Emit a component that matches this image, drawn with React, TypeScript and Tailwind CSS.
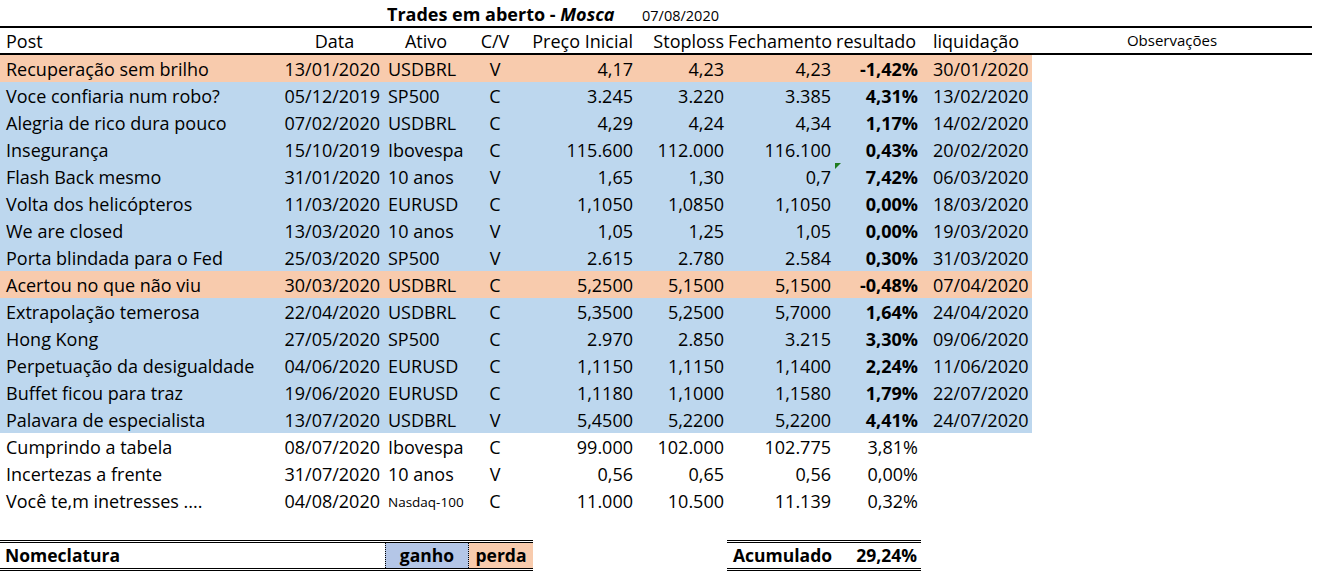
const cols =
  "grid grid-cols-[285px_99px_84px_52px_116px_91px_108px_86px_111px_280px]";

type Trade = {
  post: string;
  data: string;
  ativo: string;
  cv: string;
  inicial: string;
  stop: string;
  fech: string;
  res: string;
  liq: string;
  tone: "win" | "loss" | "open";
  flag?: boolean;
  small?: boolean;
};

const trades: Trade[] = [
  { post: "Recuperação sem brilho", data: "13/01/2020", ativo: "USDBRL", cv: "V", inicial: "4,17", stop: "4,23", fech: "4,23", res: "-1,42%", liq: "30/01/2020", tone: "loss" },
  { post: "Voce confiaria num robo?", data: "05/12/2019", ativo: "SP500", cv: "C", inicial: "3.245", stop: "3.220", fech: "3.385", res: "4,31%", liq: "13/02/2020", tone: "win" },
  { post: "Alegria de rico dura pouco", data: "07/02/2020", ativo: "USDBRL", cv: "C", inicial: "4,29", stop: "4,24", fech: "4,34", res: "1,17%", liq: "14/02/2020", tone: "win" },
  { post: "Insegurança", data: "15/10/2019", ativo: "Ibovespa", cv: "C", inicial: "115.600", stop: "112.000", fech: "116.100", res: "0,43%", liq: "20/02/2020", tone: "win" },
  { post: "Flash Back mesmo", data: "31/01/2020", ativo: "10 anos", cv: "V", inicial: "1,65", stop: "1,30", fech: "0,7", res: "7,42%", liq: "06/03/2020", tone: "win", flag: true },
  { post: "Volta dos helicópteros", data: "11/03/2020", ativo: "EURUSD", cv: "C", inicial: "1,1050", stop: "1,0850", fech: "1,1050", res: "0,00%", liq: "18/03/2020", tone: "win" },
  { post: "We are closed", data: "13/03/2020", ativo: "10 anos", cv: "V", inicial: "1,05", stop: "1,25", fech: "1,05", res: "0,00%", liq: "19/03/2020", tone: "win" },
  { post: "Porta blindada para o Fed", data: "25/03/2020", ativo: "SP500", cv: "V", inicial: "2.615", stop: "2.780", fech: "2.584", res: "0,30%", liq: "31/03/2020", tone: "win" },
  { post: "Acertou no que não viu", data: "30/03/2020", ativo: "USDBRL", cv: "C", inicial: "5,2500", stop: "5,1500", fech: "5,1500", res: "-0,48%", liq: "07/04/2020", tone: "loss" },
  { post: "Extrapolação temerosa", data: "22/04/2020", ativo: "USDBRL", cv: "C", inicial: "5,3500", stop: "5,2500", fech: "5,7000", res: "1,64%", liq: "24/04/2020", tone: "win" },
  { post: "Hong Kong", data: "27/05/2020", ativo: "SP500", cv: "C", inicial: "2.970", stop: "2.850", fech: "3.215", res: "3,30%", liq: "09/06/2020", tone: "win" },
  { post: "Perpetuação da desigualdade", data: "04/06/2020", ativo: "EURUSD", cv: "C", inicial: "1,1150", stop: "1,1150", fech: "1,1400", res: "2,24%", liq: "11/06/2020", tone: "win" },
  { post: "Buffet ficou para traz", data: "19/06/2020", ativo: "EURUSD", cv: "C", inicial: "1,1180", stop: "1,1000", fech: "1,1580", res: "1,79%", liq: "22/07/2020", tone: "win" },
  { post: "Palavara de especialista", data: "13/07/2020", ativo: "USDBRL", cv: "V", inicial: "5,4500", stop: "5,2200", fech: "5,2200", res: "4,41%", liq: "24/07/2020", tone: "win" },
  { post: "Cumprindo a tabela", data: "08/07/2020", ativo: "Ibovespa", cv: "C", inicial: "99.000", stop: "102.000", fech: "102.775", res: "3,81%", liq: "", tone: "open" },
  { post: "Incertezas a frente", data: "31/07/2020", ativo: "10 anos", cv: "V", inicial: "0,56", stop: "0,65", fech: "0,56", res: "0,00%", liq: "", tone: "open" },
  { post: "Você te,m inetresses ....", data: "04/08/2020", ativo: "Nasdaq-100", cv: "C", inicial: "11.000", stop: "10.500", fech: "11.139", res: "0,32%", liq: "", tone: "open", small: true },
];

const fills = {
  win: "bg-[#bdd7ee]",
  loss: "bg-[#f8cbad]",
  open: "",
};

const TradeRow = ({ t }: { t: Trade }) => {
  const bg = fills[t.tone];
  const cell = `h-[27px] flex items-center whitespace-nowrap ${bg}`;
  return (
    <div className={cols}>
      <div className={`${cell} pl-[6px]`}>{t.post}</div>
      <div className={`${cell} justify-end pr-[4px]`}>{t.data}</div>
      <div className={`${cell} pl-[4px] ${t.small ? "pt-[4px] text-[13.5px]" : ""}`}>{t.ativo}</div>
      <div className={`${cell} justify-center pl-[2px]`}>{t.cv}</div>
      <div className={`${cell} justify-end pr-[3px]`}>{t.inicial}</div>
      <div className={`${cell} justify-end pr-[3px]`}>{t.stop}</div>
      <div className={`${cell} justify-end pr-[4px]`}>{t.fech}</div>
      <div className={`${cell} relative justify-end pr-[3px] ${t.tone === "open" ? "" : "font-bold"}`}>
        {/* green error marker, top-left corner */}
        {t.flag && (
          <span className="absolute left-0 top-0 h-0 w-0 border-t-[6px] border-r-[6px] border-t-[#1e7b1e] border-r-transparent" />
        )}
        {t.res}
      </div>
      <div className={`${cell} pl-[12px]`}>{t.liq}</div>
      <div className="h-[27px]"></div>
    </div>
  );
};

export default function App() {
  return (
    <div className="h-[584px] w-[1318px] bg-white font-['Open_Sans',sans-serif] text-[18px] leading-none text-black">
      <div className="w-[1312px]">
        {/* Title */}
        <div className={`${cols} h-[26px] items-end pb-[3px]`}>
          <div className="col-span-2"></div>
          <div className="col-span-3 whitespace-nowrap pl-[3px] font-bold">
            Trades em aberto - <span className="italic">Mosca</span>
          </div>
          <div className="pl-[6px] text-[14.5px]">07/08/2020</div>
        </div>
        <div className="h-[2px] bg-black"></div>

        {/* Header */}
        <div className={`${cols} h-[25px] items-center whitespace-nowrap`}>
          <div className="pl-[6px]">Post</div>
          <div className="text-center">Data</div>
          <div className="text-center">Ativo</div>
          <div className="text-center pl-[2px]">C/V</div>
          <div className="text-right pr-[3px]">Preço Inicial</div>
          <div className="text-right pr-[3px]">Stoploss</div>
          <div className="text-right pr-[3px]">Fechamento</div>
          <div className="text-right pr-[5px]">resultado</div>
          <div className="pl-[12px]">liquidação</div>
          <div className="text-center text-[15px]">Observações</div>
        </div>
        <div className="h-[2px] bg-black"></div>

        {trades.map((t) => (
          <TradeRow key={t.post} t={t} />
        ))}

        {/* Legend and total */}
        <div className="mt-[26px] flex text-[17.5px] font-bold">
          <div className="flex w-[533px] border-y-[3px] border-double border-black">
            <div className="flex h-[25px] w-[385px] items-center pl-[5px] pt-[1px]">Nomeclatura</div>
            <div className="flex h-[25px] w-[84px] items-center justify-center border-x border-dotted border-black bg-[#b4c6e7] pt-[1px]">
              ganho
            </div>
            <div className="flex h-[25px] w-[64px] items-center justify-center bg-[#f8cbad] pt-[1px]">perda</div>
          </div>
          <div className="w-[194px]"></div>
          <div className="flex h-[31px] w-[194px] items-center justify-between border-y-[3px] border-double border-black pl-[6px] pr-[4px] pt-[1px]">
            <span>Acumulado</span>
            <span>29,24%</span>
          </div>
        </div>
      </div>
    </div>
  );
}
